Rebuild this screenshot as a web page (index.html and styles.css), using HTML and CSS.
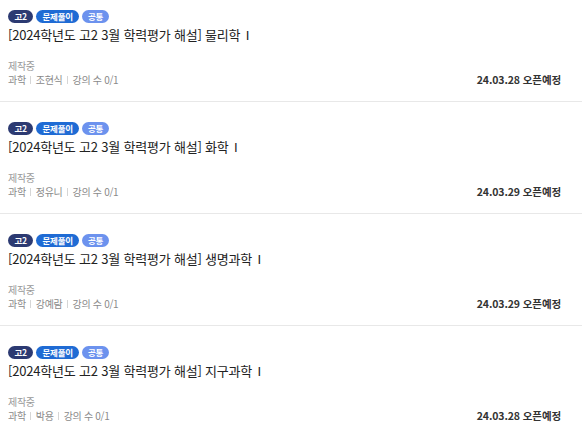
FILE: index.html
```html
<!DOCTYPE html>
<html lang="ko">
<head>
  <meta charset="UTF-8" />
  <title>강좌 목록</title>
  <link rel="stylesheet" href="styles.css">
</head>
<body>
  <ul class="course-list">
    <li class="course">
      <div class="tags">
        <span class="tag tag-grade">고2</span>
        <span class="tag tag-type">문제풀이</span>
        <span class="tag tag-common">공통</span>
      </div>
      <p class="title">[2024학년도 고2 3월 학력평가 해설] 물리학 <span class="roman">Ⅰ</span></p>
      <p class="status">제작중</p>
      <div class="meta-row">
        <p class="meta"><span>과학</span><span>조현식</span><span>강의 수 0/1</span></p>
        <p class="open-date">24.03.28 오픈예정</p>
      </div>
    </li>
    <li class="course">
      <div class="tags">
        <span class="tag tag-grade">고2</span>
        <span class="tag tag-type">문제풀이</span>
        <span class="tag tag-common">공통</span>
      </div>
      <p class="title">[2024학년도 고2 3월 학력평가 해설] 화학 <span class="roman">Ⅰ</span></p>
      <p class="status">제작중</p>
      <div class="meta-row">
        <p class="meta"><span>과학</span><span>정유니</span><span>강의 수 0/1</span></p>
        <p class="open-date">24.03.29 오픈예정</p>
      </div>
    </li>
    <li class="course">
      <div class="tags">
        <span class="tag tag-grade">고2</span>
        <span class="tag tag-type">문제풀이</span>
        <span class="tag tag-common">공통</span>
      </div>
      <p class="title">[2024학년도 고2 3월 학력평가 해설] 생명과학 <span class="roman">Ⅰ</span></p>
      <p class="status">제작중</p>
      <div class="meta-row">
        <p class="meta"><span>과학</span><span>강예람</span><span>강의 수 0/1</span></p>
        <p class="open-date">24.03.29 오픈예정</p>
      </div>
    </li>
    <li class="course">
      <div class="tags">
        <span class="tag tag-grade">고2</span>
        <span class="tag tag-type">문제풀이</span>
        <span class="tag tag-common">공통</span>
      </div>
      <p class="title">[2024학년도 고2 3월 학력평가 해설] 지구과학 <span class="roman">Ⅰ</span></p>
      <p class="status">제작중</p>
      <div class="meta-row">
        <p class="meta"><span>과학</span><span>박용</span><span>강의 수 0/1</span></p>
        <p class="open-date">24.03.28 오픈예정</p>
      </div>
    </li>
  </ul>
</body>
</html>
```
FILE: styles.css
```css
:root {
  --text-color: #222;
  --line-color: #e8e8e8;
  --font-sans: 'Noto Sans CJK KR', 'Noto Sans', sans-serif;
}

body {
  font-family: var(--font-sans);
  color: var(--text-color);
  background: #fff;
  margin: 0;
  padding: 0;
}

p {
  margin: 0;
}

.course-list {
  list-style: none;
  margin: 0;
  padding: 0;
  width: 582px;
}

.course {
  padding: 20px 21px 14px 8px;
  border-bottom: 1px solid var(--line-color);
}

.course:first-child {
  padding-top: 10px;
}

.course:last-child {
  border-bottom: none;
}

.tags {
  display: flex;
  gap: 3px;
}

.tag {
  height: 13px;
  line-height: 13px;
  padding: 0 6px;
  border-radius: 7px;
  font-size: 8.5px;
  font-weight: 700;
  letter-spacing: -0.2px;
  color: #fff;
}

.tag-grade {
  padding: 0 6.5px;
  background: #2c3a72;
}

.tag-type {
  background: #1f6bd4;
}

.tag-common {
  background: #6c92ee;
}

.title {
  margin-top: 2px;
  height: 20px;
  font-size: 13px;
  line-height: 20px;
  letter-spacing: -0.2px;
  color: #222;
}

.roman {
  margin-left: 2px;
  font-family: 'DejaVu Sans', sans-serif;
  font-size: 12.5px;
  line-height: 1;
  letter-spacing: 0;
}

.status {
  margin-top: 14px;
  font-size: 10px;
  line-height: 14px;
  letter-spacing: -0.3px;
  color: #999;
}

.meta-row {
  display: flex;
  justify-content: space-between;
  align-items: center;
}

.meta {
  display: flex;
  align-items: center;
  font-size: 10px;
  line-height: 14px;
  letter-spacing: -0.3px;
  color: #8a8a8a;
}

.meta span + span::before {
  content: "";
  display: inline-block;
  width: 1px;
  height: 8px;
  margin: 0 5px 0 4px;
  background: #d6d6d6;
}

.open-date {
  font-size: 10.5px;
  line-height: 14px;
  font-weight: 700;
  letter-spacing: -0.1px;
  color: #333;
}
```
